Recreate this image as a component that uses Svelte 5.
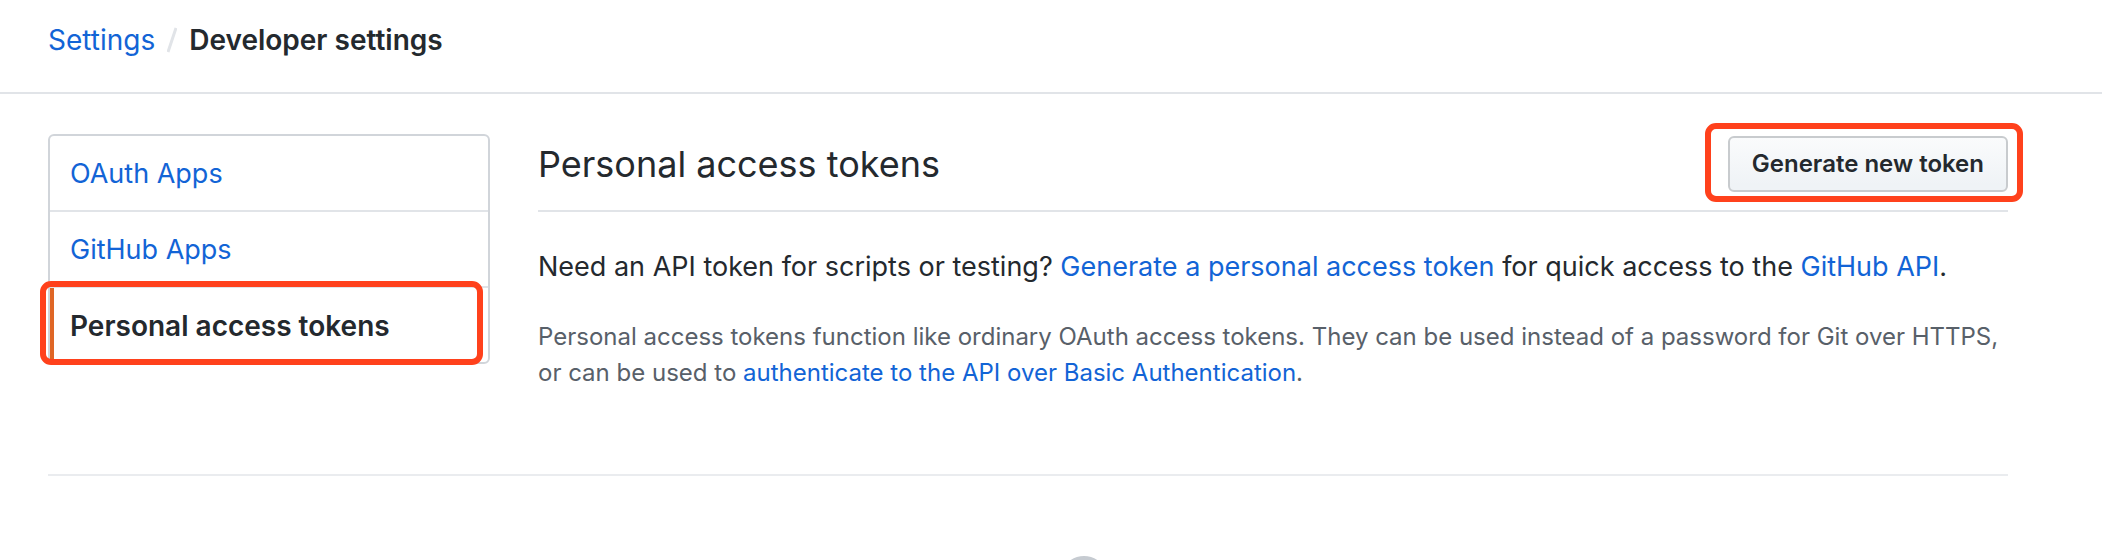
<script>
  const menu = [
    { label: 'OAuth Apps' },
    { label: 'GitHub Apps' },
    { label: 'Personal access tokens', current: true }
  ];
</script>

<div class="page">
  <header class="topbar">
    <nav class="crumbs" aria-label="Breadcrumb">
      <a href="#settings">Settings</a>
      <svg class="slash" viewBox="0 0 10 26" aria-hidden="true"><path d="M9 1 1 25" /></svg>
      <strong>Developer settings</strong>
    </nav>
  </header>

  <div class="container">
    <div class="columns">
      <nav class="menu" aria-label="Developer settings">
        {#each menu as item}
          <a
            class="item"
            class:current={item.current}
            href="#menu"
            aria-current={item.current ? 'page' : undefined}>{item.label}</a>
        {/each}
      </nav>

      <main class="content">
        <div class="subhead">
          <h2>Personal access tokens</h2>
          <div class="action">
            <button type="button">Generate new token</button>
          </div>
        </div>
        <p class="lead">
          Need an API token for scripts or testing? <a href="#new">Generate a personal access token</a> for quick access to the <a href="#api">GitHub API</a>.
        </p>
        <p class="note">
          Personal access tokens function like ordinary OAuth access tokens. They can be used instead of a password for Git over HTTPS, or can be used to <a href="#auth">authenticate to the API over Basic Authentication</a>.
        </p>
      </main>
    </div>

    <footer class="footer">
      <svg class="mark" viewBox="0 0 16 16" aria-hidden="true">
        <path d="M8 0C3.58 0 0 3.58 0 8c0 3.54 2.29 6.53 5.47 7.59.4.07.55-.17.55-.38 0-.19-.01-.82-.01-1.49-2.01.37-2.53-.49-2.69-.94-.09-.23-.48-.94-.82-1.13-.28-.15-.68-.52-.01-.53.63-.01 1.08.58 1.23.82.72 1.21 1.87.87 2.33.66.07-.52.28-.87.51-1.07-1.78-.2-3.64-.89-3.64-3.95 0-.87.31-1.59.82-2.15-.08-.2-.36-1.02.08-2.12 0 0 .67-.21 2.2.82.64-.18 1.32-.27 2-.27s1.36.09 2 .27c1.53-1.04 2.2-.82 2.2-.82.44 1.1.16 1.92.08 2.12.51.56.82 1.27.82 2.15 0 3.07-1.87 3.75-3.65 3.95.29.25.54.73.54 1.48 0 1.07-.01 1.93-.01 2.2 0 .21.15.46.55.38A8.01 8.01 0 0 0 16 8c0-4.42-3.58-8-8-8z" />
      </svg>
    </footer>
  </div>
</div>

<style>
  .page {
    height: 100vh;
    overflow: hidden;
    background: #fff;
    color: #24292e;
    font-family: Inter, 'Liberation Sans', sans-serif;
    font-size: 27px;
    line-height: 42px;
  }

  a {
    color: #1264d6;
    text-decoration: none;
  }

  .topbar {
    padding: 19px 48px 31px;
    border-bottom: 2px solid #e1e4e8;
  }

  .crumbs {
    display: flex;
    align-items: center;
    font-size: 28px;
  }

  .crumbs strong {
    font-weight: 600;
  }

  .slash {
    width: 10px;
    height: 26px;
    margin: 0 12px;
    fill: none;
    stroke: #e1e4e8;
    stroke-width: 3;
  }

  .container {
    padding: 40px 94px 0 48px;
  }

  .columns {
    display: flex;
    align-items: flex-start;
    gap: 48px;
  }

  .menu {
    flex: none;
    box-sizing: border-box;
    width: 442px;
    border: 2px solid #d1d5da;
    border-radius: 6px;
  }

  .item {
    display: block;
    position: relative;
    padding: 17px 20px 15px;
    border-bottom: 2px solid #e1e4e8;
  }

  .item:last-child {
    border-bottom: 0;
  }

  .item.current {
    color: #24292e;
    font-size: 28px;
    font-weight: 600;
  }

  .item.current::before {
    content: '';
    position: absolute;
    inset: 0 auto 0 0;
    width: 4px;
    background: #df6626;
  }

  .item.current::after {
    content: '';
    position: absolute;
    inset: -7px 5px -3px -10px;
    border: 6px solid #ff411c;
    border-radius: 11px;
  }

  .content {
    flex: 1;
    min-width: 0;
  }

  .subhead {
    display: flex;
    align-items: center;
    justify-content: space-between;
    padding: 2px 0 18px;
    border-bottom: 2px solid #e1e4e8;
  }

  h2 {
    margin: 0;
    font-size: 36px;
    font-weight: 400;
    line-height: 56px;
  }

  .action {
    position: relative;
  }

  .action::after {
    content: '';
    position: absolute;
    inset: -13px -15px -10px -23px;
    border: 6px solid #ff411c;
    border-radius: 11px;
    pointer-events: none;
  }

  button {
    display: block;
    padding: 7px 22px;
    border: 2px solid #c8cbce;
    border-radius: 6px;
    background: linear-gradient(#fafbfc, #eff3f6 90%);
    color: #24292e;
    font: 600 24px/38px Inter, 'Liberation Sans', sans-serif;
  }

  .lead {
    margin: 34px 0 0;
  }

  .note {
    margin: 31px 0 0;
    color: #586069;
    font-size: 24px;
    line-height: 36px;
  }

  .footer {
    display: flex;
    justify-content: center;
    margin-top: 83px;
    padding: 80px 0 40px 112px;
    border-top: 2px solid #eaecef;
  }

  .mark {
    width: 48px;
    height: 48px;
    fill: #c6cbd1;
  }
</style>
